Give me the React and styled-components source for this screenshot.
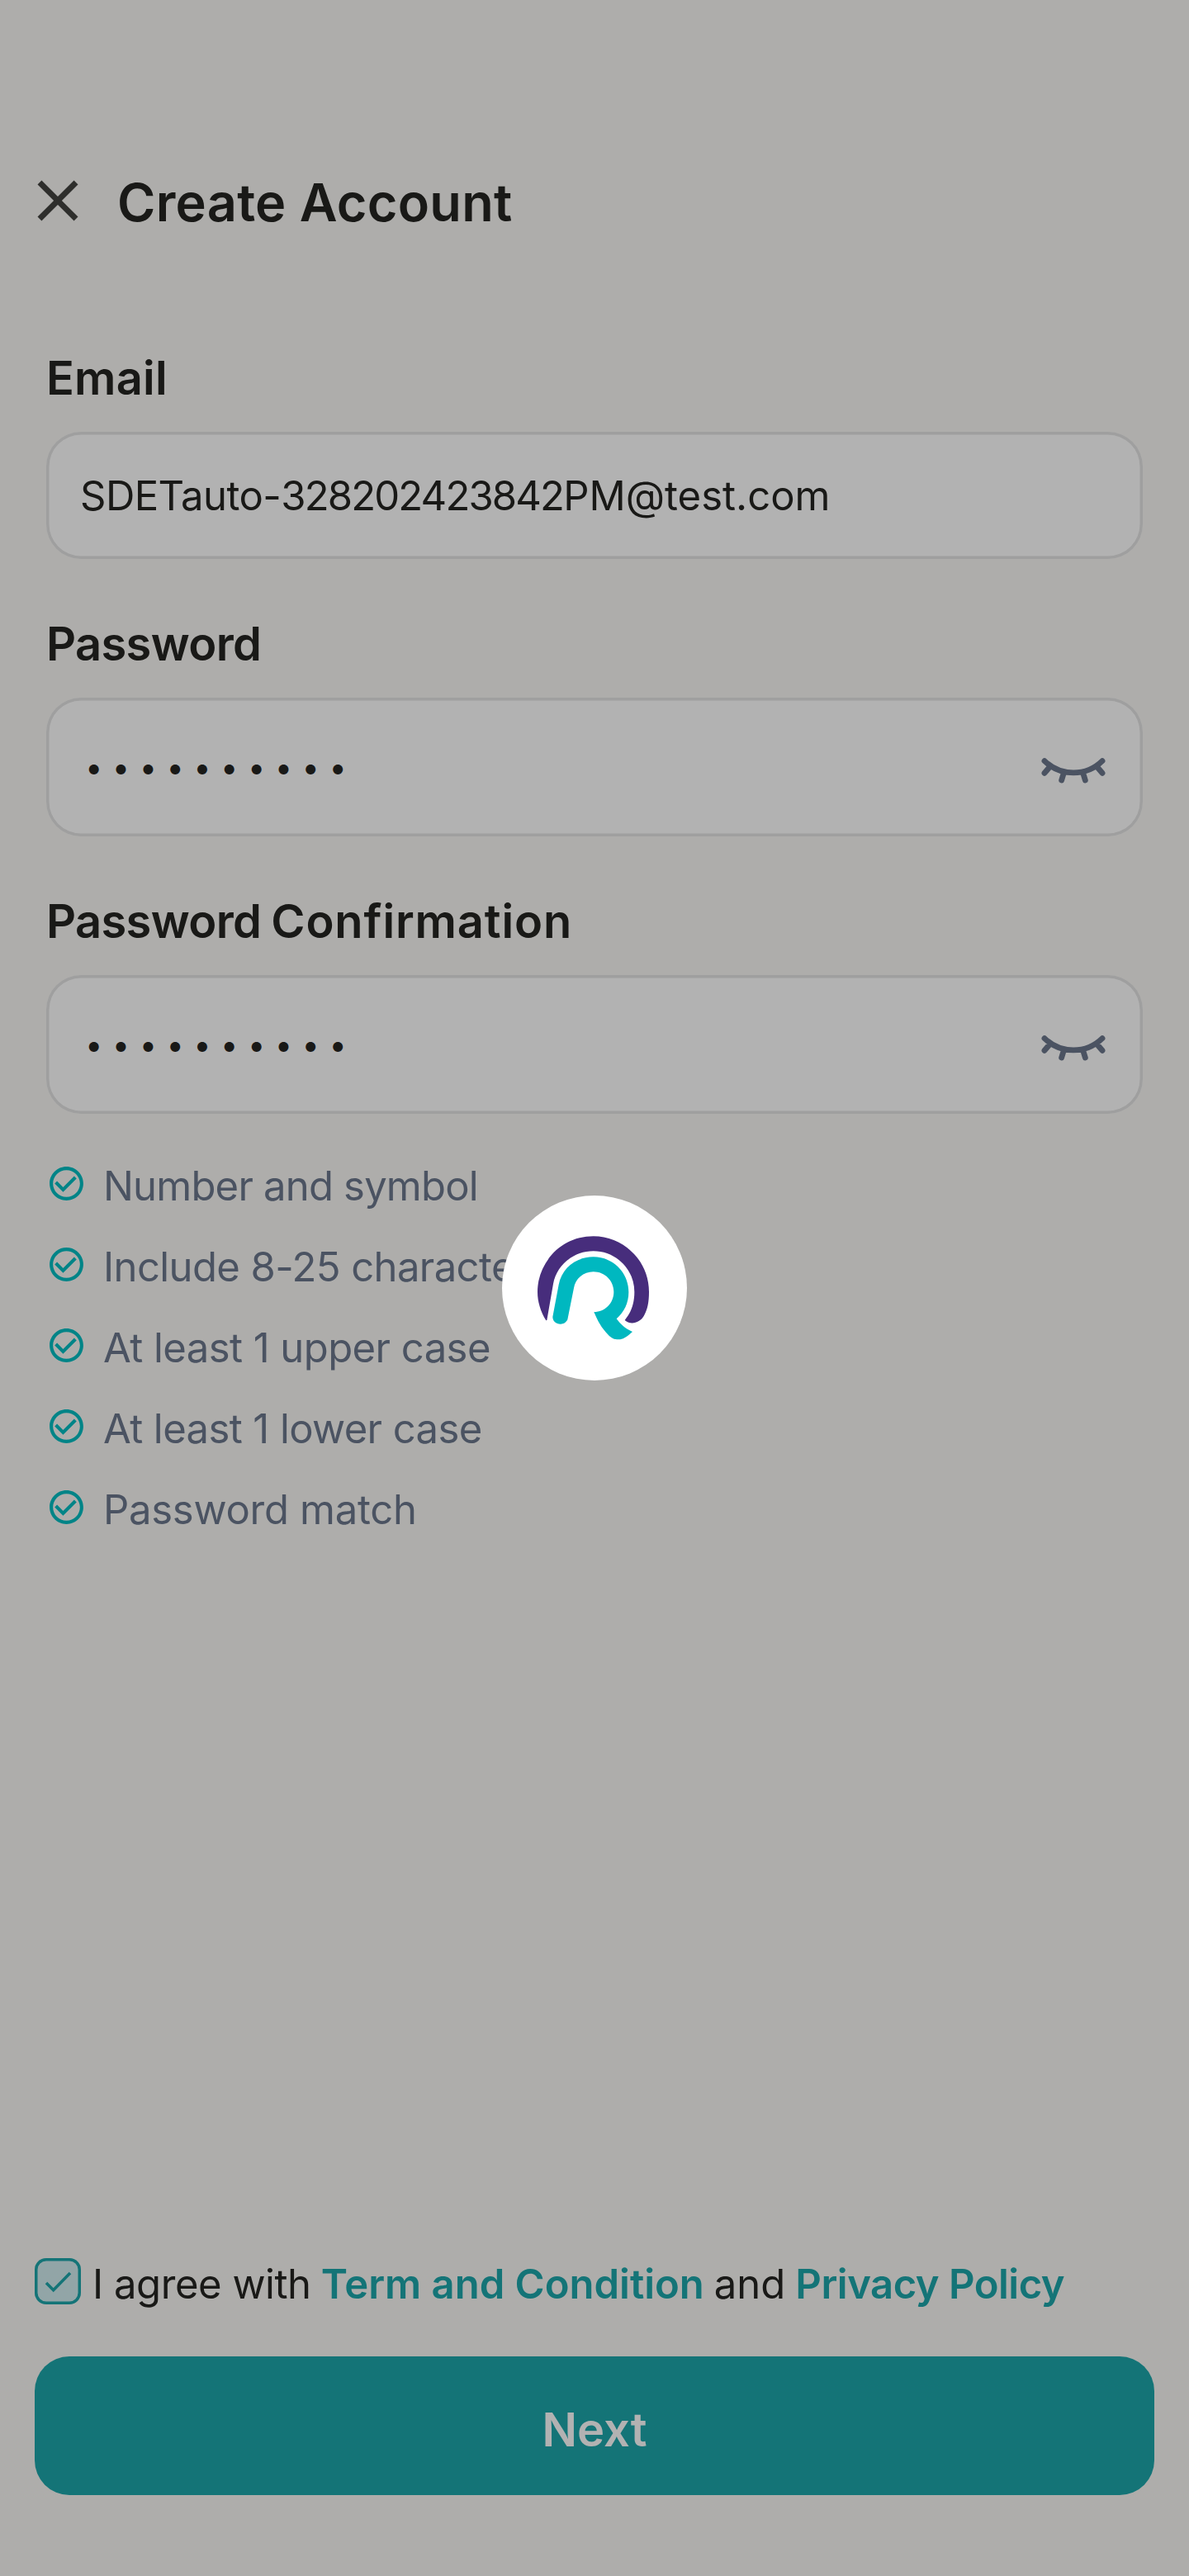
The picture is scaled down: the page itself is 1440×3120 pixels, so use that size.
import React from "react";
import styled, { createGlobalStyle } from "styled-components";

const Global = createGlobalStyle`
  *, *::before, *::after { box-sizing: border-box; }
  body { margin: 0; background: #f8f7f4; }
`;

const Screen = styled.div`
  position: relative;
  display: flex;
  flex-direction: column;
  width: 1440px;
  height: 3120px;
  overflow: hidden;
  background: #f9f8f5;
  color: #252421;
  font-family: Inter, "Noto Sans", sans-serif;
`;

const Header = styled.header`
  display: flex;
  align-items: flex-start;
  gap: 30px;
  padding: 201px 28px 0;
`;

const CloseButton = styled.button`
  display: flex;
  padding: 0;
  border: 0;
  background: none;
  color: #424240;
`;

const Title = styled.h1`
  margin: 2px 0 0;
  font-size: 63px;
  font-weight: 600;
  line-height: 84px;
  letter-spacing: 0.26px;
`;

const Form = styled.main`
  display: flex;
  flex-direction: column;
  gap: 65px;
  padding: 133px 56px 0;
`;

const Field = styled.div`
  display: flex;
  flex-direction: column;
  gap: 27px;
`;

const Label = styled.label`
  font-size: 56px;
  font-weight: 600;
  line-height: 76px;
  word-spacing: -1.5px;
  white-space: pre;
`;

const InputBox = styled.div`
  display: flex;
  align-items: center;
  justify-content: space-between;
  height: ${(p) => p.$height}px;
  padding: 0 42px 0 41px;
  border-radius: 42px;
  background: #ffffff;
  box-shadow: inset 0 0 0 3.5px #e4e4e4;
`;

const Value = styled.span`
  padding-top: 1px;
  font-size: 49px;
  line-height: 67px;
  white-space: pre;
`;

const Mask = styled.span`
  padding-left: 6px;
  font-size: 38px;
  line-height: 60px;
  letter-spacing: 11.45px;
`;

const Tracked = styled.span`
  letter-spacing: ${(p) => p.$track}px;
`;

const EyeButton = styled.button`
  display: flex;
  padding: 0;
  border: 0;
  background: none;
  color: #6c788d;
`;

const Rules = styled.ul`
  display: flex;
  flex-direction: column;
  gap: 31px;
  margin: 54px 0 0;
  padding: 0 56px;
  list-style: none;
`;

const Rule = styled.li`
  display: flex;
  align-items: flex-start;
  gap: 20px;
  color: #6c788d;
  font-size: 49px;
  line-height: 67px;
  letter-spacing: ${(p) => p.$track}px;
  white-space: pre;

  svg {
    flex: none;
    margin-top: 6px;
    color: #00bdc2;
  }
`;

const Footer = styled.footer`
  display: flex;
  flex-direction: column;
  gap: 54px;
  margin-top: auto;
  padding: 0 42px 98px;
`;

const Agreement = styled.div`
  display: flex;
  align-items: flex-start;
  gap: 14px;
  height: 67px;
`;

const Checkbox = styled.span`
  display: flex;
  width: 56px;
  height: 56px;
  margin-top: 2px;
  border-radius: 14px;
  background: #d2edf0;
  box-shadow: inset 0 0 0 3.5px #1da7ab;
  color: #1da7ab;
`;

const Consent = styled.p`
  display: flex;
  gap: 12px;
  margin: 0;
  font-size: 49px;
  line-height: 67px;
  white-space: pre;
`;

const Link = styled.a`
  color: #1da7ab;
  font-weight: 600;
  letter-spacing: ${(p) => p.$track || 0}px;
`;

const NextButton = styled.button`
  height: 168px;
  padding: 10px 0 0;
  border: 0;
  border-radius: 42px;
  background: #1da7ab;
  color: #ffffff;
  font: 600 56px/76px Inter, "Noto Sans", sans-serif;
`;

const Overlay = styled.div`
  position: absolute;
  inset: 0;
  display: flex;
  align-items: center;
  justify-content: center;
  background: rgba(0, 0, 0, 0.3);
`;

const Spinner = styled.div`
  display: flex;
  width: 224px;
  height: 224px;
  border-radius: 50%;
  background: #ffffff;
`;

const CloseIcon = () => (
  <svg width="84" height="84" viewBox="0 0 24 24" fill="currentColor">
    <path d="M19 6.41 17.59 5 12 10.59 6.41 5 5 6.41 10.59 12 5 17.59 6.41 19 12 13.41 17.59 19 19 17.59 13.41 12z" />
  </svg>
);

const ClosedEyeIcon = () => (
  <svg width="84" height="84" viewBox="174 81 252 252" fill="none" stroke="currentColor" strokeWidth="20.5" strokeLinecap="round">
    <path d="M195 185C253 242 347 242 405 185M213 208L195 229M387 208L405 229M264 232L257 255M336 232L343 255" />
  </svg>
);

const CheckCircleIcon = () => (
  <svg width="49" height="49" viewBox="0 0 24 24" fill="currentColor">
    <path d="M16.59 7.58 10 14.17l-3.59-3.58L5 12l5 5 8-8zM12 2C6.48 2 2 6.48 2 12s4.48 10 10 10 10-4.48 10-10S17.52 2 12 2zm0 18c-4.42 0-8-3.58-8-8s3.58-8 8-8 8 3.58 8 8-3.58 8-8 8z" />
  </svg>
);

const TickIcon = () => (
  <svg width="56" height="56" viewBox="0 0 56 56" fill="none" stroke="currentColor" strokeWidth="3.6">
    <path d="M14 30L22.7 38.7L43 18" />
  </svg>
);

const Logo = () => (
  <svg width="224" height="224" viewBox="54 54 672 672">
    <path
      fill="#472d7c"
      d="M214 508C194 474 183 440 183 404C183 390 185 375 187 364C208 270 286 202 386 202C498 202 588 293 588 404C588 440 583 468 569 492C556 515 522 527 500 507C522 480 535 448 535 404C535 322 468 256 386 256C314 256 252 307 240 375L217 507Z"
    />
    <path
      fill="#00b8c0"
      d="M238 495L260 378C271 318 323 277 386 277C457 277 514 334 514 405C514 444 498 477 470 502C488 526 506 540 528 549C508 567 495 577 478 577C460 577 452 572 440 560C415 535 402 510 388 477C428 477 460 445 460 404C460 364 428 331 386 331C350 331 320 357 315 390L292 505C285 517 277 521 267 521C250 521 238 510 238 495Z"
    />
  </svg>
);

const rules = [
  { text: "Number and symbol", track: -0.8 },
  { text: "Include 8-25 characters", track: -0.6 },
  { text: "At least 1 upper case", track: -0.56 },
  { text: "At least 1 lower case", track: -0.6 },
  { text: "Password match", track: -0.27 },
];

function PasswordInput() {
  return (
    <InputBox $height={168}>
      <Mask>{"•".repeat(10)}</Mask>
      <EyeButton aria-label="Show password">
        <ClosedEyeIcon />
      </EyeButton>
    </InputBox>
  );
}

export default function App() {
  return (
    <>
      <Global />
      <Screen>
        <Header>
          <CloseButton aria-label="Close">
            <CloseIcon />
          </CloseButton>
          <Title>Create Account</Title>
        </Header>

        <Form>
          <Field>
            <Label>
              <Tracked $track={0.2}>Email</Tracked>
            </Label>
            <InputBox $height={154}>
              <Value>
                <Tracked $track={-0.55}>SDETauto-</Tracked>
                <Tracked $track={-1.85}>328202423842</Tracked>
                <Tracked $track={0}>PM@test.com</Tracked>
              </Value>
            </InputBox>
          </Field>
          <Field>
            <Label>
              <Tracked $track={-0.65}>Password</Tracked>
            </Label>
            <PasswordInput />
          </Field>
          <Field>
            <Label>
              <Tracked $track={-0.65}>Password </Tracked>
              <Tracked $track={0.85}>Confirmation</Tracked>
            </Label>
            <PasswordInput />
          </Field>
        </Form>

        <Rules>
          {rules.map((rule) => (
            <Rule key={rule.text} $track={rule.track}>
              <CheckCircleIcon />
              {rule.text}
            </Rule>
          ))}
        </Rules>

        <Footer>
          <Agreement>
            <Checkbox>
              <TickIcon />
            </Checkbox>
            <Consent>
              <Tracked $track={-0.45}>I agree with</Tracked>
              <Link>Term and Condition</Link>
              <span>and</span>
              <Link $track={-0.5}>Privacy Policy</Link>
            </Consent>
          </Agreement>
          <NextButton>Next</NextButton>
        </Footer>

        <Overlay>
          <Spinner>
            <Logo />
          </Spinner>
        </Overlay>
      </Screen>
    </>
  );
}
